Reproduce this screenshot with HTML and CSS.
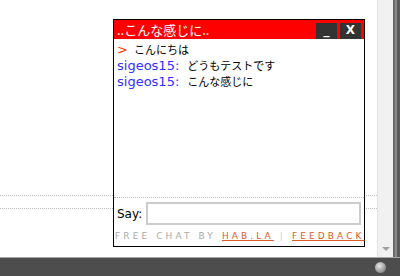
FILE: index.html
```html
<!DOCTYPE html>
<html lang="ja">
<head>
  <meta charset="UTF-8" />
  <title>Chat</title>
  <link rel="stylesheet" href="styles.css">
</head>
<body>
  <div class="window">
    <div class="page">
      <div class="content">
        <div class="rule rule-top"></div>
        <div class="rule"></div>

        <!-- chat widget floats over the page -->
        <div class="chatbox">
          <div class="chat-title">
            <span class="chat-name">..こんな感じに..</span>
            <span class="title-btn">_</span>
            <span class="title-btn">X</span>
          </div>
          <ul class="messages">
            <li><span class="prompt">&gt;</span><span class="msg">こんにちは</span></li>
            <li><span class="nick">sigeos15:</span><span class="msg">どうもテストです</span></li>
            <li><span class="nick">sigeos15:</span><span class="msg">こんな感じに</span></li>
          </ul>
          <div class="say-row">
            <label for="sayInput">Say:</label>
            <input type="text" id="sayInput" />
          </div>
          <div class="credits">
            FREE CHAT BY <a href="#">HAB.LA</a> <span class="sep">|</span> <a href="#">FEEDBACK</a>
          </div>
        </div>
      </div>
      <div class="vscroll">
        <span class="arrow-down"></span>
      </div>
      <div class="edge"></div>
    </div>
    <div class="statusbar">
      <span class="knob"></span>
    </div>
  </div>
</body>
</html>
```

FILE: styles.css
```css
body {
  margin: 0;
  font-family: "DejaVu Sans", "Noto Sans CJK JP", sans-serif;
  font-size: 12px;
  background: #fff;
}

.window {
  width: 400px;
  height: 276px;
  display: flex;
  flex-direction: column;
  overflow: hidden;
}

.page {
  display: flex;
  height: 257px;
}

.content {
  position: relative;
  flex: 1;
  background: #fff;
  padding-top: 195px;
  box-sizing: border-box;
}

.rule {
  border-top: 1px dotted #bbb;
  margin-top: 12px;
}

.rule-top {
  margin-top: 0;
}

.vscroll {
  width: 16px;
  background: #f1f1f1;
  border-left: 1px solid #e4e4e4;
  display: flex;
  justify-content: center;
  align-items: flex-end;
  padding-bottom: 6px;
  box-sizing: border-box;
}

.arrow-down {
  width: 0;
  height: 0;
  border-left: 4px solid transparent;
  border-right: 4px solid transparent;
  border-top: 4px solid #a0a0a0;
}

.edge {
  width: 7px;
  background: linear-gradient(to right, #6a6a6a 0, #6a6a6a 2px, #8a8a8a 2px, #8a8a8a 4px, #5a5a5a 4px);
}

.statusbar {
  flex: 1;
  background: #4d4d4d;
  border-top: 1px solid #a8a8a8;
  display: flex;
  justify-content: flex-end;
  align-items: center;
  padding-right: 14px;
}

.knob {
  width: 11px;
  height: 11px;
  border-radius: 50%;
  background: radial-gradient(circle at 40% 35%, #e8e8e8, #9a9a9a 60%, #6a6a6a);
}

/* Chat widget */
.chatbox {
  position: absolute;
  left: 113px;
  top: 19px;
  width: 252px;
  height: 228px;
  border: 1px solid #000;
  box-sizing: border-box;
  background: #fff;
  display: flex;
  flex-direction: column;
}

.chat-title {
  background: #ff0000;
  height: 19px;
  display: flex;
  align-items: center;
  padding: 0 3px;
  gap: 3px;
}

.chat-name {
  flex: 1;
  color: #fff;
  font-family: "Noto Sans CJK JP", sans-serif;
  font-size: 13px;
  line-height: 17px;
}

.title-btn {
  width: 21px;
  height: 16px;
  background: #333;
  color: #fff;
  font-size: 12px;
  font-weight: bold;
  line-height: 15px;
  text-align: center;
  margin-top: 2px;
}

.messages {
  list-style: none;
  margin: 0;
  padding: 2px 3px 0 3px;
  flex: 1;
}

.messages li {
  line-height: 16px;
  height: 16px;
  color: #000;
  font-size: 13px;
  white-space: nowrap;
}

.msg {
  font-family: "Noto Sans CJK JP", sans-serif;
  font-size: 11px;
}

.prompt {
  color: #ff3300;
  margin-right: 6px;
}

.nick {
  color: #3030ff;
  margin-right: 8px;
}

.say-row {
  border-top: 1px dotted #bbb;
  display: flex;
  align-items: center;
  gap: 4px;
  padding: 4px 3px 0 3px;
}

.say-row label {
  color: #000;
  font-size: 12px;
}

.say-row input {
  flex: 1;
  height: 23px;
  border: 2px solid #ccc;
  box-sizing: border-box;
  margin: 0;
  padding: 0 2px;
  outline: none;
}

.credits {
  font-size: 9px;
  letter-spacing: 3.1px;
  color: #aaa;
  padding: 6px 0 5px 1px;
  white-space: nowrap;
  line-height: 10px;
}

.credits a {
  color: #e05a28;
  text-decoration: underline;
}

.sep {
  color: #ccc;
}
```
